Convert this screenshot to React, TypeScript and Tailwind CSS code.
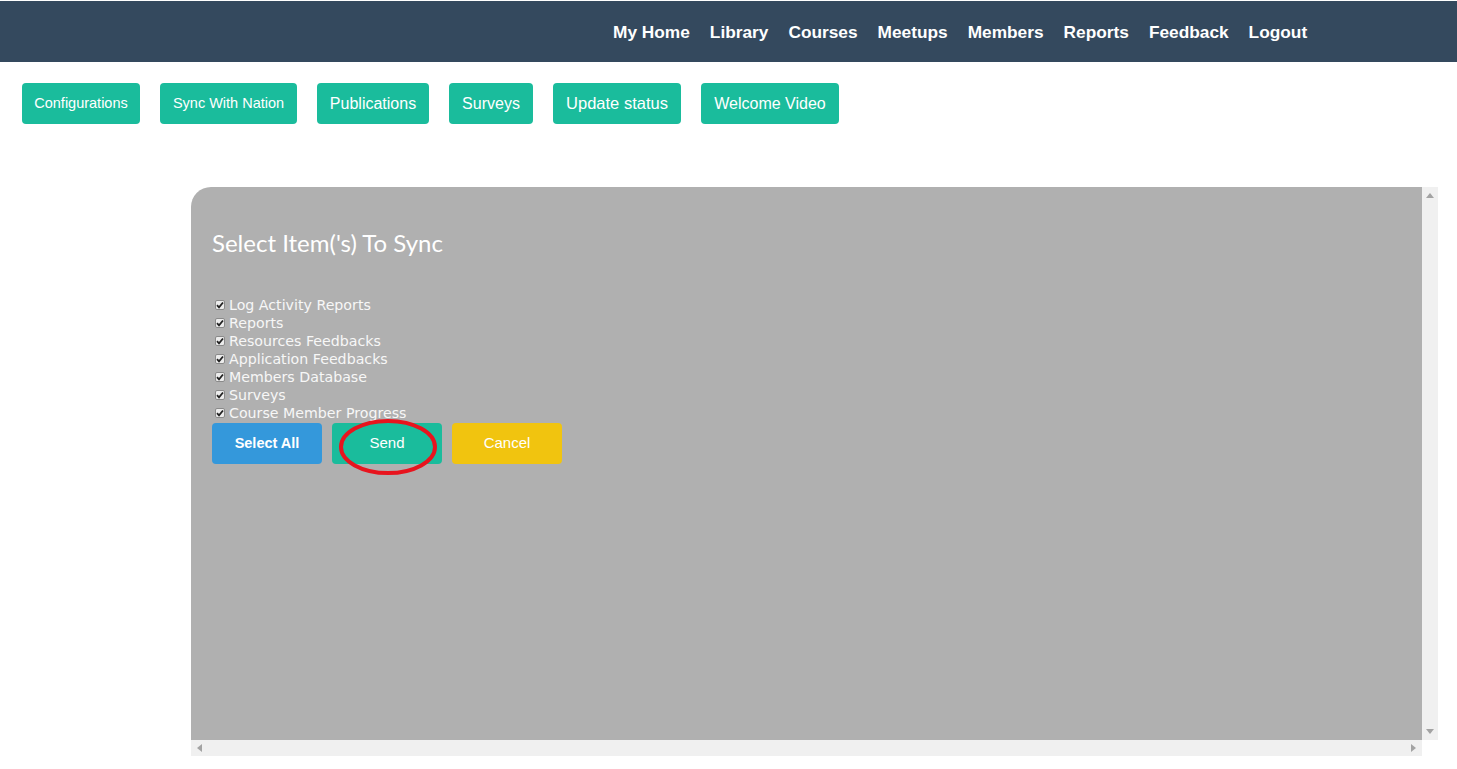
import React from "react";

const navLinks = ["My Home", "Library", "Courses", "Meetups", "Members", "Reports", "Feedback", "Logout"];

const topButtons = [
  { label: "Configurations", w: "w-[118px]", size: "text-[14.5px]" },
  { label: "Sync With Nation", w: "w-[137px]", size: "text-[14.5px]" },
  { label: "Publications", w: "w-[112px]", size: "text-[16px]" },
  { label: "Surveys", w: "w-[84px]", size: "text-[16px]" },
  { label: "Update status", w: "w-[128px]", size: "text-[16.5px]" },
  { label: "Welcome Video", w: "w-[138px]", size: "text-[16px]" },
];

const syncItems = [
  "Log Activity Reports",
  "Reports",
  "Resources Feedbacks",
  "Application Feedbacks",
  "Members Database",
  "Surveys",
  "Course Member Progress",
];

function CheckBox() {
  return (
    <span className="flex h-[10px] w-[10px] items-center justify-center rounded-[2px] border border-[#8a8a8a] bg-[#ececec]">
      <svg width="8" height="8" viewBox="0 0 8 8">
        <path d="M1 4.2 L3 6.3 L7 1.5" fill="none" stroke="#222" strokeWidth="1.8" />
      </svg>
    </span>
  );
}

export default function App() {
  return (
    <div className="min-h-screen bg-white" style={{ fontFamily: '"Liberation Sans", Arial, sans-serif' }}>
      <nav className="mt-px flex h-[61px] items-center gap-5 bg-[#34495e] pl-[613px] pt-[2px]">
        {navLinks.map((link) => (
          <a key={link} className="text-[17.3px] font-bold text-white">
            {link}
          </a>
        ))}
      </nav>

      <div className="mt-[21px] flex gap-5 pl-[22px]">
        {topButtons.map((b) => (
          <button
            key={b.label}
            className={`flex h-[41px] items-center justify-center rounded-[4px] bg-[#1abc9c] text-white ${b.w} ${b.size}`}
          >
            {b.label}
          </button>
        ))}
      </div>

      <div className="ml-[191px] mt-[63px] flex h-[569px] w-[1247px] flex-col">
        <div className="flex flex-1">
          <div className="relative flex-1 rounded-tl-[20px] bg-[#b0b0b0] pl-[21px] pt-[42px]">
            <h2 className="text-[24px] leading-[28px] text-white" style={{ fontFamily: "Lato, sans-serif" }}>
              Select Item('s) To Sync
            </h2>
            <ul className="mt-[39px]" style={{ fontFamily: '"DejaVu Sans", Verdana, sans-serif' }}>
              {syncItems.map((item) => (
                <li key={item} className="flex h-[18px] items-center gap-[4px] pl-[3px] text-[14.2px] text-[#f7f7f7]">
                  <CheckBox />
                  <span className="pt-[2px]">{item}</span>
                </li>
              ))}
            </ul>
            <div className="relative mt-px flex gap-[10px]">
              <button className="h-[41px] w-[110px] rounded-[4px] bg-[#3498db] text-[14.5px] font-bold text-white">
                Select All
              </button>
              <button className="h-[41px] w-[110px] rounded-[4px] bg-[#1abc9c] text-[15px] text-white">Send</button>
              <button className="h-[41px] w-[110px] rounded-[4px] bg-[#f1c40f] text-[15px] text-white">Cancel</button>
              <svg className="absolute left-[126px] top-[-8px]" width="104" height="64" viewBox="0 0 104 64">
                <ellipse cx="50" cy="32" rx="47" ry="26" fill="none" stroke="#e8141e" strokeWidth="4" />
              </svg>
            </div>
          </div>
          <div className="flex w-[16px] flex-col items-center justify-between bg-[#f0f0f0] py-[6px]">
            <svg width="8" height="5" viewBox="0 0 8 5">
              <path d="M0 5 L4 0 L8 5 Z" fill="#a3a3a3" />
            </svg>
            <svg width="8" height="5" viewBox="0 0 8 5">
              <path d="M0 0 L4 5 L8 0 Z" fill="#a3a3a3" />
            </svg>
          </div>
        </div>
        <div className="flex h-[16px]">
          <div className="flex flex-1 items-center justify-between bg-[#f0f0f0] px-[6px]">
            <svg width="5" height="8" viewBox="0 0 5 8">
              <path d="M5 0 L0 4 L5 8 Z" fill="#a3a3a3" />
            </svg>
            <svg width="5" height="8" viewBox="0 0 5 8">
              <path d="M0 0 L5 4 L0 8 Z" fill="#a3a3a3" />
            </svg>
          </div>
          <div className="w-[16px] bg-white" />
        </div>
      </div>
    </div>
  );
}
